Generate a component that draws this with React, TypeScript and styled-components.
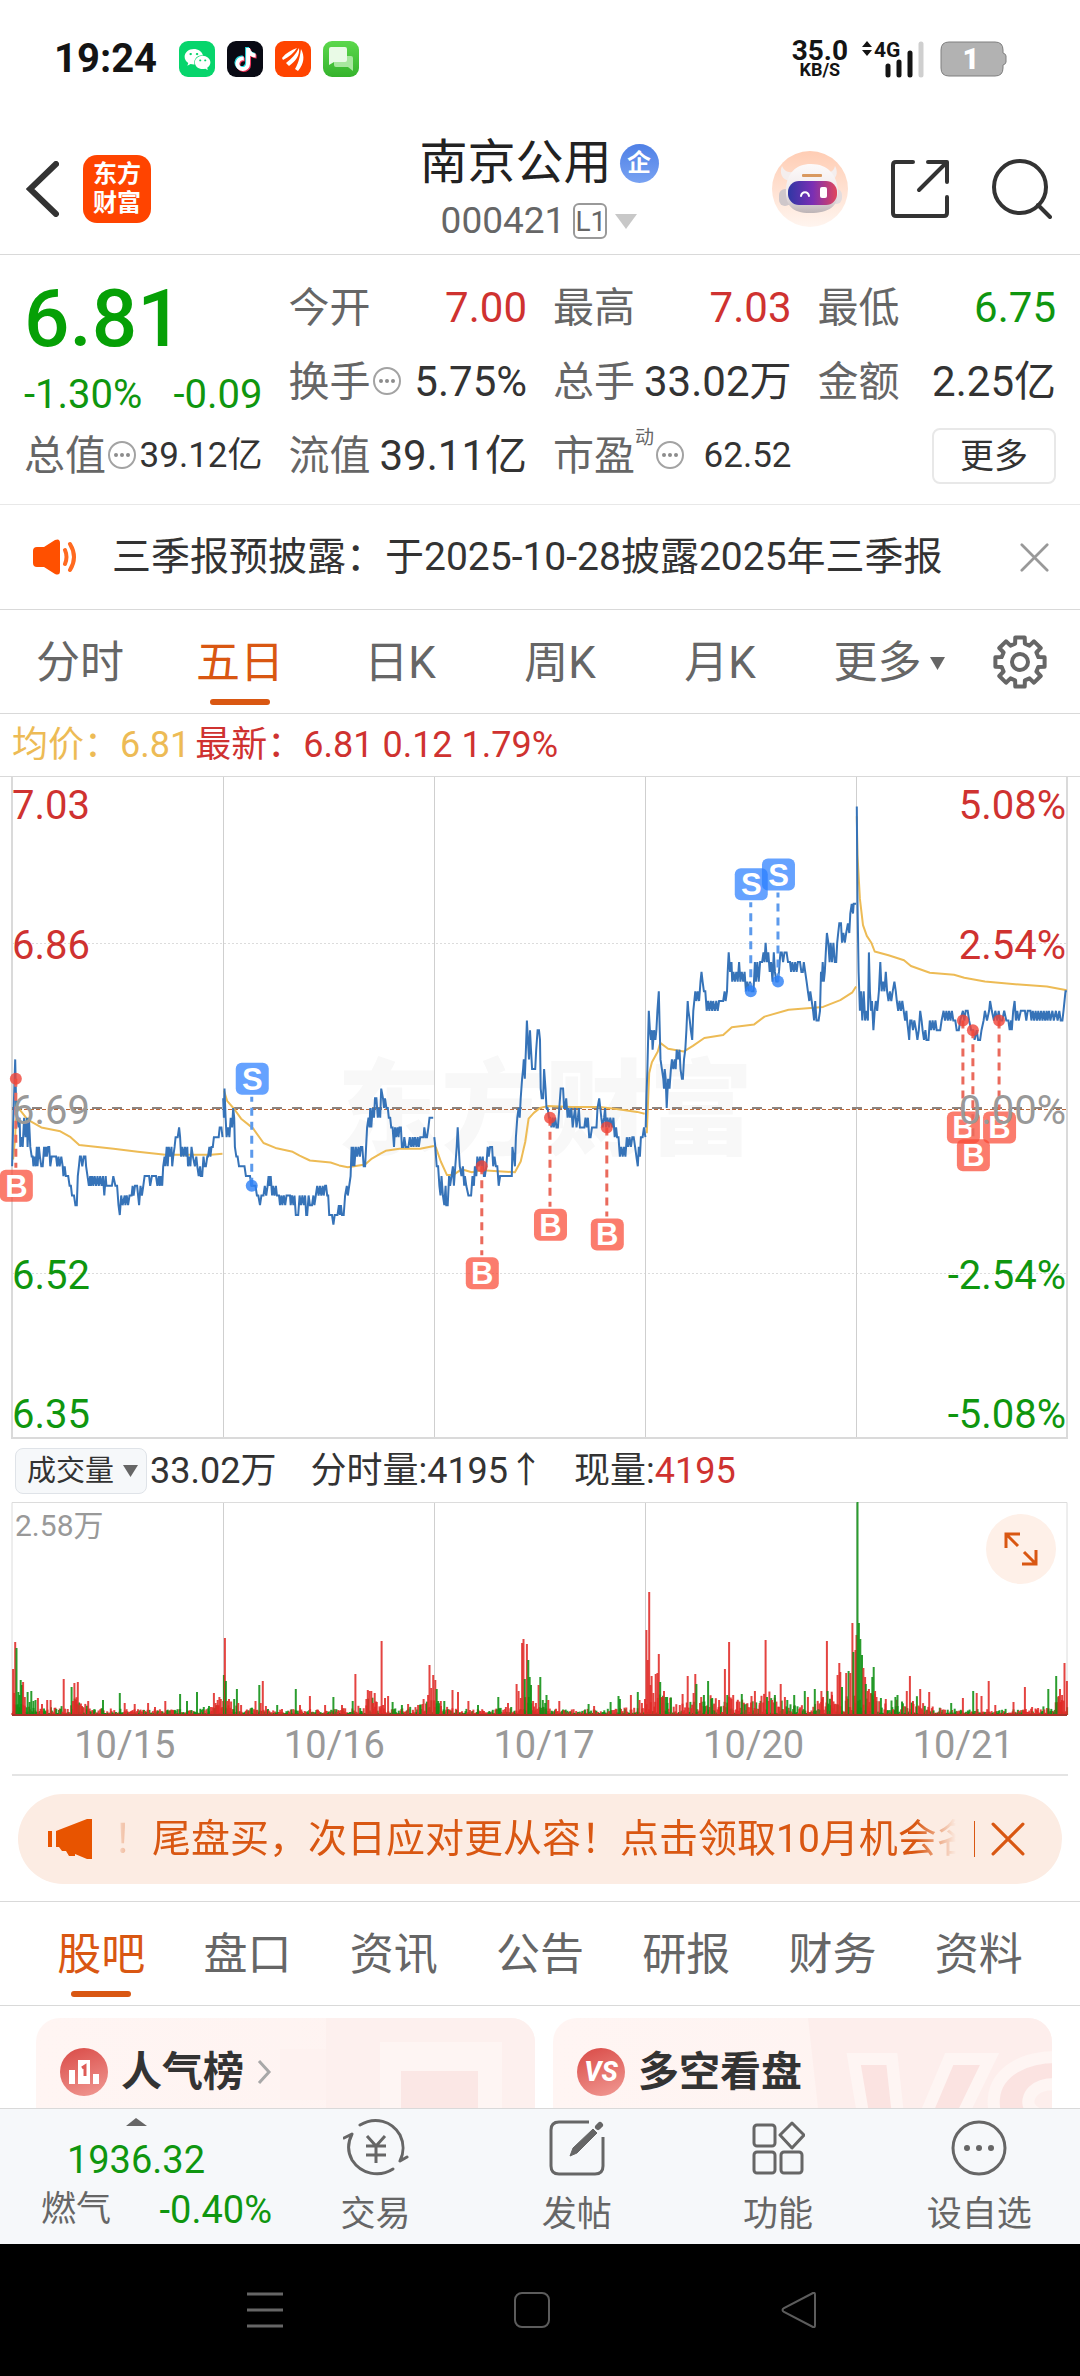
import React from 'react';
import styled, { createGlobalStyle } from 'styled-components';
import { FaWeixin } from 'react-icons/fa';
import { FaTiktok } from 'react-icons/fa6';

const C = {
  text: '#333333',
  sub: '#666666',
  mute: '#999999',
  line: '#d9d9d9',
  soft: '#e8e8e8',
  red: '#cf3230',
  green: '#0f960f',
  bright: '#06a006',
  orange: '#d95712',
  brand: '#ff4400',
  gold: '#edbb55',
  blue: '#3673b8',
  panel: '#f6f8fa',
};

const Global = createGlobalStyle`
  *, *::before, *::after { box-sizing: border-box; }
  body { margin: 0; background: #fff; }
  body, button, select {
    font-family: Roboto, "Noto Sans CJK SC", sans-serif;
    color: ${C.text};
  }
  button { background: none; border: 0; padding: 0; margin: 0; cursor: pointer; }
  svg { display: block; flex: none; }
  h1, h2, p, dl, dd, dt { margin: 0; font-weight: 400; }
`;

const Page = styled.div`
  display: flex;
  flex-direction: column;
  height: 100vh;
  overflow: hidden;
`;

/* ---------- status bar ---------- */

const StatusBar = styled.div`
  display: flex;
  justify-content: space-between;
  align-items: center;
  height: 80px;
  padding: 38px 73px 0 54px;
  color: #141414;
`;

const StatusGroup = styled.div<{ $gap: number }>`
  display: flex;
  align-items: center;
  gap: ${(p) => p.$gap}px;
`;

const Clock = styled.span`
  font-size: 40px;
  line-height: 42px;
  font-weight: 700;
  margin-right: 10px;
`;

const AppBadge = styled.span<{ $bg: string }>`
  display: flex;
  align-items: center;
  justify-content: center;
  width: 36px;
  height: 36px;
  border-radius: 9px;
  background: ${(p) => p.$bg};
  color: #fff;
`;

const Speed = styled.div`
  display: flex;
  flex-direction: column;
  align-items: center;
  font-weight: 700;
  font-size: 28px;
  line-height: 22px;
`;

const SpeedUnit = styled.span`
  font-size: 18px;
  line-height: 16px;
`;

/* ---------- title bar ---------- */

const Header = styled.header`
  display: grid;
  grid-template-columns: 1fr auto 1fr;
  align-items: center;
  padding: 58px 28px 15px 26px;
  border-bottom: 1px solid ${C.line};
`;

const HeaderSide = styled.div<{ $gap: number; $end?: boolean }>`
  display: flex;
  align-items: center;
  justify-content: ${(p) => (p.$end ? 'flex-end' : 'flex-start')};
  gap: ${(p) => p.$gap}px;
`;

const Logo = styled.span`
  display: flex;
  align-items: center;
  justify-content: center;
  width: 68px;
  height: 68px;
  border-radius: 14px;
  background: ${C.brand};
  color: #fff;
  font-size: 24px;
  line-height: 29px;
  font-weight: 700;
  text-align: center;
`;

const TitleBlock = styled.div`
  display: flex;
  flex-direction: column;
  align-items: center;
  gap: 15px;
`;

const TitleRow = styled.div`
  display: flex;
  align-items: center;
  gap: 8px;
`;

const Title = styled.h1`
  font-size: 48px;
  line-height: 50px;
  color: #222;
`;

const CorpBadge = styled.span`
  width: 39px;
  height: 39px;
  border-radius: 50%;
  background: linear-gradient(#4f80e6, #78a2f2);
  color: #fff;
  font-size: 24px;
  line-height: 38px;
  font-weight: 700;
  text-align: center;
`;

const CodeRow = styled.button`
  display: flex;
  align-items: center;
  gap: 8px;
  height: 36px;
  font-size: 37px;
  line-height: 36px;
  color: ${C.sub};
`;

const LevelTag = styled.span`
  width: 34px;
  height: 36px;
  border: 2px solid ${C.mute};
  border-radius: 6px;
  font-size: 28px;
  line-height: 33px;
  text-align: center;
`;

/* ---------- quote ---------- */

const Quote = styled.dl`
  display: grid;
  grid-template-columns: repeat(4, 1fr);
  grid-auto-rows: 56px;
  gap: 18px 26px;
  padding: 25px 24px 20px;
  border-bottom: 1px solid ${C.soft};
`;

const PriceCell = styled.div`
  grid-row: span 2;
  display: flex;
  flex-direction: column;
  justify-content: space-between;
  color: ${C.bright};
`;

const Price = styled.dd`
  font-size: 80px;
  line-height: 78px;
  font-weight: 500;
`;

const Change = styled.dd`
  display: flex;
  justify-content: space-between;
  font-size: 40px;
  line-height: 30px;
  color: ${C.green};
`;

const Cell = styled.div`
  display: flex;
  align-items: center;
  justify-content: space-between;
  white-space: nowrap;
`;

const Label = styled.dt`
  display: flex;
  align-items: center;
  font-size: 41px;
  line-height: 56px;
  color: ${C.sub};
`;

const Sup = styled.sup`
  align-self: flex-start;
  font-size: 19px;
  line-height: 20px;
`;

const Value = styled.dd<{ $color?: string; $small?: boolean }>`
  font-size: ${(p) => (p.$small ? 35 : 42)}px;
  line-height: 56px;
  color: ${(p) => p.$color || C.text};
`;

const MoreButton = styled.button`
  justify-self: end;
  width: 124px;
  height: 56px;
  border: 2px solid ${C.soft};
  border-radius: 8px;
  font-size: 34px;
  line-height: 50px;
`;

/* ---------- notice ---------- */

const Notice = styled.div`
  display: flex;
  align-items: center;
  padding: 25px 31px;
  border-bottom: 1px solid ${C.line};
`;

const NoticeText = styled.p`
  flex: 1;
  margin-left: 32px;
  font-size: 39px;
  line-height: 54px;
  white-space: nowrap;
  overflow: hidden;
`;

/* ---------- tabs ---------- */

const TabBar = styled.nav<{ $pad?: number }>`
  display: flex;
  padding: 0 ${(p) => p.$pad || 0}px;
  border-bottom: 1px solid ${C.line};
`;

const Tab = styled.button<{ $active?: boolean }>`
  flex: 1 1 0;
  display: flex;
  flex-direction: column;
  align-items: center;
  gap: 6px;
  padding: 23px 0 8px;
  font-size: 44px;
  line-height: 60px;
  color: ${(p) => (p.$active ? C.orange : C.sub)};
  white-space: nowrap;

  &::after {
    content: '';
    width: 60px;
    height: 6px;
    border-radius: 3px;
    background: ${(p) => (p.$active ? C.orange : 'transparent')};
  }
`;

const TabLabel = styled.span`
  display: flex;
  align-items: center;
  gap: 8px;
  padding-left: 18px;
`;

const GearButton = styled.button`
  display: flex;
  align-items: center;
  justify-content: center;
  width: 120px;
`;

/* ---------- chart ---------- */

const Legend = styled.div`
  display: flex;
  gap: 9px;
  padding-left: 12px;
  font-size: 36px;
  line-height: 62px;
  color: ${C.red};
`;

const LegendAverage = styled.span`
  color: ${C.gold};
  margin-right: -4px;
`;

const ChartSvg = styled.svg`
  width: 100%;
  height: auto;
`;

const VolumeHead = styled.div`
  display: flex;
  align-items: center;
  height: 63px;
  padding-left: 15px;
  font-size: 36px;
  line-height: 46px;
  white-space: nowrap;
`;

const SelectWrap = styled.label`
  position: relative;
  display: flex;
  align-items: center;

  svg {
    position: absolute;
    right: 9px;
    pointer-events: none;
  }
`;

const IndexSelect = styled.select`
  appearance: none;
  width: 132px;
  height: 46px;
  padding: 0 0 0 11px;
  border: 1px solid #dfe3e8;
  border-radius: 8px;
  background: ${C.panel};
  font-size: 29px;
  line-height: 40px;
`;

const VolumeItem = styled.span<{ $gap: number }>`
  margin-left: ${(p) => p.$gap}px;

  em {
    font-style: normal;
    color: ${C.red};
  }
`;

const VolumeWrap = styled.div`
  position: relative;
`;

const ExpandButton = styled.button`
  position: absolute;
  top: 12px;
  right: 24px;
  display: flex;
  align-items: center;
  justify-content: center;
  width: 70px;
  height: 70px;
  border-radius: 50%;
  background: #fef0e8;
`;

const Dates = styled.div`
  display: grid;
  grid-template-columns: repeat(5, 1fr);
  margin: 0 12px;
  padding-left: 8px;
  border-bottom: 2px solid #e4e4e4;
  font-size: 38px;
  line-height: 58px;
  text-align: center;
  color: ${C.mute};
`;

/* ---------- banner ---------- */

const Banner = styled.div`
  display: flex;
  align-items: center;
  height: 90px;
  margin: 18px 18px 17px;
  padding: 0 37px 0 29px;
  border-radius: 45px;
  background: #fcece3;
  color: ${C.orange};
`;

const BannerLink = styled.a`
  flex: 1;
  min-width: 0;
  margin: 0 18px 0 20px;
  font-size: 39px;
  line-height: 54px;
  color: inherit;
  text-decoration: none;
  white-space: nowrap;
  overflow: hidden;
  mask-image: linear-gradient(90deg, transparent, #000 40px, #000 calc(100% - 40px), transparent);
`;

const BannerRule = styled.span`
  width: 1px;
  height: 36px;
  margin-right: 16px;
  background: ${C.orange};
`;

const SectionTop = styled.div`
  border-top: 1px solid ${C.line};
`;

/* ---------- feed cards ---------- */

const Feed = styled.main`
  flex: 1;
  min-height: 0;
  overflow: hidden;
  display: grid;
  grid-template-columns: 1fr 1fr;
  align-items: start;
  gap: 18px;
  padding: 12px 28px 0 36px;
`;

const Card = styled.section`
  position: relative;
  display: flex;
  align-items: center;
  gap: 13px;
  height: 180px;
  padding: 0 24px 72px;
  border-radius: 24px;
  background: linear-gradient(90deg, #fff5f3, #fef3f1);
  overflow: hidden;
`;

const CardArt = styled.svg`
  position: absolute;
  top: 0;
  right: 0;
`;

const CardTitle = styled.h2`
  position: relative;
  font-size: 41px;
  line-height: 56px;
  font-weight: 700;
`;

const CardIcon = styled.span`
  display: flex;
  align-items: center;
  justify-content: center;
  width: 48px;
  height: 48px;
  border-radius: 50%;
  background: linear-gradient(160deg, #d94a46, #f19a94);
  color: #fff;
  font-size: 27px;
  font-weight: 800;
  font-style: italic;
`;

/* ---------- bottom navigation ---------- */

const BottomNav = styled.nav`
  display: flex;
  border-top: 1px solid ${C.line};
  background: ${C.panel};
`;

const IndexButton = styled.button`
  width: 275px;
  padding: 9px 3px 0 41px;
  display: flex;
  flex-direction: column;
  color: ${C.green};
  font-size: 38px;
`;

const IndexValue = styled.span`
  display: flex;
  flex-direction: column;
  align-items: center;
  gap: 8px;
  margin-left: -41px;
  line-height: 52px;
`;

const IndexRow = styled.span`
  display: flex;
  justify-content: space-between;
  line-height: 48px;
`;

const IndexName = styled.span`
  font-size: 35px;
  color: ${C.sub};
`;

const NavButton = styled.button`
  flex: 1 1 0;
  display: flex;
  flex-direction: column;
  align-items: center;
  gap: 19px;
  padding: 11px 0 9px;
  font-size: 35px;
  line-height: 40px;
  color: ${C.sub};
`;

const NavIcon = styled.span`
  display: flex;
  align-items: center;
  height: 56px;
`;

const SystemNav = styled.div`
  display: grid;
  grid-template-columns: repeat(3, 1fr);
  height: 132px;
  padding: 0 147px 0 131px;
  background: #000;
`;

const SystemKey = styled.button`
  display: flex;
  align-items: center;
  justify-content: center;
`;

/* ---------- icons ---------- */

const Down = ({ w, h, color }: { w: number; h: number; color: string }) => (
  <svg width={w} height={h} viewBox="0 0 10 10" preserveAspectRatio="none" aria-hidden>
    <path d="M0 0H10L5 10Z" fill={color} />
  </svg>
);

const Info = () => (
  <svg width="31" height="31" viewBox="0 0 31 31" aria-hidden>
    <circle cx="16" cy="14" r="13" fill="none" stroke="#a3a3a3" strokeWidth="2" />
    <g fill="#8c8c8c">
      <circle cx="10" cy="14" r="2" />
      <circle cx="16" cy="14" r="2" />
      <circle cx="22" cy="14" r="2" />
    </g>
  </svg>
);

const Cross = ({ size, color, sw }: { size: number; color: string; sw: number }) => (
  <svg width={size} height={size} viewBox="0 0 32 32" aria-hidden>
    <path d="M2 2L30 30M30 2L2 30" stroke={color} strokeWidth={sw} strokeLinecap="round" />
  </svg>
);

const Robot = () => (
  <svg width="76" height="76" viewBox="0 0 76 76" aria-hidden>
    <defs>
      <linearGradient id="halo" x1="0" y1="0" x2="0" y2="1">
        <stop offset="0" stopColor="#ffcdb4" />
        <stop offset="1" stopColor="#fff5ef" />
      </linearGradient>
      <linearGradient id="visor" x1="0" y1="0" x2="1" y2="0">
        <stop offset="0" stopColor="#2f37a4" />
        <stop offset=".5" stopColor="#7a2fb4" />
        <stop offset="1" stopColor="#e0465c" />
      </linearGradient>
      <linearGradient id="shell" x1="0" y1="0" x2="0" y2="1">
        <stop offset="0" stopColor="#fdfafa" />
        <stop offset=".6" stopColor="#efe9ea" />
        <stop offset="1" stopColor="#bdb4b6" />
      </linearGradient>
    </defs>
    <circle cx="38" cy="38" r="38" fill="url(#halo)" />
    <path d="M10 15C7 22 10 29 18 30L24 20C17 23 12 20 10 15ZM63 15C67 22 64 29 57 30L51 20C58 23 62 20 63 15Z" fill="#f4eeee" />
    <rect x="7" y="38" width="12" height="17" rx="6" fill="#cfc7ca" />
    <rect x="59" y="38" width="11" height="15" rx="6" fill="#e3dcde" />
    <path d="M39 13C56 13 65 24 66 40C67 55 57 62 38 62C20 62 13 54 14 38C15 23 23 13 39 13Z" fill="url(#shell)" />
    <rect x="30" y="23" width="20" height="3" rx="1" fill="#d9995f" />
    <rect x="16" y="30" width="49" height="24" rx="11" fill="url(#visor)" />
    <path d="M29 45C30 40 36 40 37 45" fill="none" stroke="#fff" strokeWidth="2" strokeLinecap="round" />
    <rect x="48" y="36" width="7" height="11" rx="2" fill="#fff" />
  </svg>
);

const Share = () => (
  <svg width="58" height="58" viewBox="0 0 58 58" fill="none" stroke="#333" strokeWidth="4" strokeLinecap="round" strokeLinejoin="round" aria-hidden>
    <path d="M22 2H5Q2 2 2 5V53Q2 56 5 56H53Q56 56 56 53V37" />
    <path d="M37 2H56V22M55 3L28 30" />
  </svg>
);

const Search = () => (
  <svg width="60" height="60" viewBox="0 0 60 60" fill="none" stroke="#333" strokeWidth="4" strokeLinecap="round" aria-hidden>
    <circle cx="28" cy="28" r="26" />
    <path d="M46 46L58 58" />
  </svg>
);

const Speaker = () => (
  <svg width="49" height="38" viewBox="0 0 49 38" aria-hidden>
    <path d="M6 9H13L24 2Q29 0 29 5V33Q29 38 24 36L13 29H6Q2 29 2 25V13Q2 9 6 9Z" fill="#ff5000" />
    <path d="M34 12Q37 19 34 26M39 6Q47 19 39 32" fill="none" stroke="#ff6a20" strokeWidth="4" strokeLinecap="round" />
  </svg>
);

const Megaphone = () => (
  <svg width="46" height="42" viewBox="0 0 46 42" fill="#e85400" aria-hidden>
    <path d="M1 13H5V29H1ZM9 13L40 1H45V41H40L28 36V38H22L19 33H15L12 29H9Z" />
  </svg>
);

const Gear = () => {
  const pts: string[] = [];
  for (let i = 0; i < 8; i++) {
    const a = (i * Math.PI) / 4 - Math.PI / 2;
    [[-0.26, 19], [-0.19, 25], [0.19, 25], [0.26, 19]].forEach(([d, r]) => {
      pts.push(`${(27 + r * Math.cos(a + d)).toFixed(1)},${(27 + r * Math.sin(a + d)).toFixed(1)}`);
    });
  }
  return (
    <svg width="54" height="54" viewBox="0 0 54 54" fill="none" stroke={C.sub} strokeWidth="4" strokeLinejoin="round" aria-hidden>
      <polygon points={pts.join(' ')} />
      <circle cx="27" cy="27" r="8" />
    </svg>
  );
};

const Trade = () => (
  <svg width="66" height="60" viewBox="0 0 66 60" fill="none" stroke={C.sub} strokeWidth="3" strokeLinecap="round" strokeLinejoin="round" aria-hidden>
    <path d="M17 7C32 -2 49 3 57 17C61 25 61 35 57 43L64 39" />
    <path d="M50 51C36 60 18 56 9 42C4 33 5 24 9 16L1 20" />
    <path d="M24 18L33 28L42 18M33 28V45M23 28H43M23 37H43" strokeLinecap="butt" />
  </svg>
);

const Compose = () => (
  <svg width="56" height="58" viewBox="0 0 56 58" fill="none" stroke={C.sub} strokeWidth="3" aria-hidden>
    <path d="M40 3H10Q2 3 2 11V47Q2 55 10 55H46Q54 55 54 47V18" />
    <path d="M21 37L24 29L44 10L48 14L28 34Z" fill={C.sub} strokeWidth="1" />
    <path d="M49 8L51 6" strokeWidth="6" strokeLinecap="round" />
  </svg>
);

const Apps = () => (
  <svg width="54" height="56" viewBox="0 0 54 56" fill="none" stroke={C.sub} strokeWidth="3" strokeLinejoin="round" aria-hidden>
    <rect x="3" y="5" width="21" height="21" rx="3" />
    <rect x="3" y="32" width="21" height="21" rx="3" />
    <rect x="30" y="32" width="21" height="21" rx="3" />
    <path d="M41 3L53 15L41 28L29 15Z" />
  </svg>
);

const Dots = () => (
  <svg width="56" height="56" viewBox="0 0 56 56" aria-hidden>
    <circle cx="28" cy="28" r="26" fill="none" stroke={C.sub} strokeWidth="3" />
    <g fill={C.sub}>
      <circle cx="16" cy="28" r="3" />
      <circle cx="28" cy="28" r="3" />
      <circle cx="40" cy="28" r="3" />
    </g>
  </svg>
);

/* ---------- chart data ---------- */

// Horizontal positions run over AXIS units across the screen; prices are in cents away from 6.69.
const AXIS = 3136;
const W = 1080;
const LEFT = 12;
const DAY = 211;
const RIGHT = LEFT + DAY * 5;
const px = (x: number) => (x * W) / AXIS;
const ZERO = 332;
const CENT = 165.3 / 17;
const py = (c: number) => ZERO - c * CENT;

const PRICE = [
  '35:-6 38:-2 44:5 47:0 50:-1 54:-2 57:-1 59:-4 62:-3 66:-4 70:-1 74:-3 78:-1 80:-4 84:-1 88:-4 92:-5 95:-5 97:-6 100:-5 104:-6 107:-4 109:-6 113:-4 116:-5 120:-6 124:-6 128:-4 131:-5 134:-4 136:-5 140:-4 143:-4 146:-6 150:-5 163:-5 166:-6 170:-5 173:-6 178:-5 182:-6 184:-7 188:-6 191:-7 195:-7 198:-7 202:-8 206:-8 209:-9 215:-9 219:-10 223:-10 226:-7 229:-6 232:-5 235:-5 239:-6 243:-5 248:-5 250:-6 254:-7 258:-8 262:-7 264:-8 268:-7 271:-8 275:-7 279:-8 283:-7 287:-8 291:-7 295:-8 299:-7 303:-9 307:-7 309:-8 325:-8 329:-7 335:-8 340:-8 344:-10 348:-11 352:-9 356:-10 362:-9 364:-10 368:-9 372:-10 376:-9 382:-9 385:-8 388:-9 392:-8 398:-8 404:-10 408:-8 412:-9 416:-8 420:-7 433:-7 436:-8 441:-7 453:-7 457:-8 461:-7 464:-8 467:-7 471:-8 474:-6 478:-5 480:-6 484:-4 487:-6 490:-4 494:-5 498:-4 500:-6 503:-5 507:-4 510:-3 516:-3 520:-2 523:-3 526:-5 529:-4 533:-5 537:-4 541:-5 544:-4 546:-6 550:-5 553:-6 556:-4 560:-5 566:-6 570:-5 573:-6 577:-7 581:-6 583:-7 587:-7 591:-5 594:-6 598:-6 602:-5 604:-5 608:-4 611:-5 614:-4 618:-4 621:-3 635:-3 638:-2 643:-2 646:-3',
  '648:1 650:-1 652:2 655:-1 658:-3 662:-2 666:-3 670:-1 674:-2 677:0 680:-1 682:-4 686:-5 690:-5 694:-6 710:-6 714:-7 726:-7 730:-8 742:-8 746:-9 750:-9 755:-10 759:-9 765:-9 769:-8 773:-9 777:-8 780:-7 783:-8 786:-7 790:-9 793:-8 797:-9 801:-8 804:-9 810:-9 813:-10 817:-9 820:-10 824:-9 828:-10 832:-9 842:-9 844:-10 848:-9 852:-10 855:-9 859:-11 866:-11 870:-9 874:-10 878:-9 882:-10 886:-9 889:-11 892:-11 896:-9 900:-10 906:-10 910:-9 913:-10 917:-9 921:-8 925:-9 929:-8 933:-9 937:-8 940:-9 944:-8 947:-8 950:-9 953:-9 956:-11 964:-11 968:-12 972:-11 980:-11 984:-10 987:-11 990:-10 993:-11 998:-11 1002:-9 1007:-8 1010:-9 1014:-8 1018:-7 1021:-4 1024:-6 1026:-4 1029:-6 1033:-4 1037:-5 1041:-4 1045:-5 1048:-4 1052:-4 1056:-6 1060:-6 1063:-4 1066:-2 1070:-1 1073:-2 1075:0 1078:-2 1082:0 1086:-1 1089:1 1093:1 1097:-1 1101:0 1104:-1 1107:2 1112:1 1115:0 1118:1 1122:0 1126:0 1129:-1 1133:-1 1136:-2 1140:-2 1144:-4 1147:-2 1150:-3 1154:-2 1157:-3 1160:-2 1164:-2 1167:-4 1171:-4 1174:-3 1178:-4 1186:-4 1190:-3 1194:-4 1198:-3 1201:-4 1205:-3 1209:-4 1213:-3 1216:-4 1220:-3 1230:-3 1232:-2 1236:-3 1240:-3 1244:-2 1247:-1 1258:-1',
  '1261:-3 1264:-4 1268:-6 1272:-6 1276:-8 1279:-9 1282:-7 1286:-9 1290:-10 1294:-8 1296:-10 1300:-10 1304:-7 1307:-8 1311:-7 1315:-6 1318:-8 1322:-6 1326:-4 1329:-2 1332:-4 1335:-6 1340:-7 1344:-6 1348:-8 1350:-7 1354:-8 1360:-9 1368:-9 1372:-7 1376:-8 1379:-6 1383:-7 1386:-5 1390:-6 1394:-5 1398:-6 1402:-5 1405:-7 1408:-7 1412:-6 1416:-4 1419:-5 1423:-4 1429:-4 1432:-6 1436:-5 1440:-6 1444:-6 1448:-8 1452:-7 1486:-7 1488:-4 1492:-5 1495:-6 1498:-3 1502:-1 1506:0 1509:-1 1512:1 1516:3 1519:4 1521:5 1524:3 1527:6 1530:9 1533:7 1536:5 1539:8 1542:6 1545:4 1554:4 1557:6 1561:8 1565:8 1568:7 1570:2 1573:1 1577:1 1580:4 1584:2 1587:0 1590:0 1594:-1 1597:-1 1601:-2 1605:-1 1608:-2 1612:-1 1616:-2 1620:-2 1624:0 1628:2 1635:2 1638:0 1641:0 1644:1 1648:-1 1651:0 1655:-1 1659:0 1663:-2 1666:-1 1670:0 1674:-2 1678:-1 1681:0 1684:-2 1697:-2 1700:-1 1704:-2 1707:-1 1711:-3 1715:-3 1719:-2 1732:-2 1735:0 1740:1 1743:0 1746:-1 1750:-2 1754:-1 1757:0 1760:-2 1764:-1 1768:-2 1772:-1 1778:-2 1781:-1 1785:-3 1789:-2 1792:-3 1796:-3 1800:-5 1804:-4 1808:-5 1812:-4 1816:-5 1820:-3 1824:-4 1828:-3 1832:-4 1836:-3 1840:-3 1844:-4 1848:-5 1852:-6 1855:-4 1858:-5 1861:-3 1866:-3 1870:-2 1874:-3',
  '1875:-2 1877:1 1880:4 1884:10 1887:8 1890:7 1893:8 1895:6 1899:8 1903:7 1906:8 1909:10 1913:12 1915:9 1918:5 1922:4 1926:3 1928:2 1930:4 1933:3 1936:0 1940:3 1944:2 1948:4 1951:5 1955:4 1959:5 1962:4 1965:6 1969:5 1973:6 1976:4 1980:3 1983:3 1986:5 1990:6 1993:8 1997:11 1999:10 2003:9 2006:8 2010:7 2013:10 2016:11 2019:12 2022:11 2026:12 2030:11 2034:13 2037:14 2040:13 2044:12 2048:12 2052:10 2056:11 2060:10 2064:11 2068:10 2071:11 2076:10 2080:11 2084:10 2088:11 2100:11 2104:12 2107:11 2111:12 2113:14 2116:16 2120:14 2124:15 2126:13 2130:14 2134:13 2138:14 2142:13 2146:15 2150:13 2154:14 2158:13 2162:14 2166:12 2170:13 2174:12 2178:13 2182:12 2188:12 2192:15 2195:13 2199:15 2203:13 2207:15 2213:15 2217:16 2220:15 2223:17 2227:15 2231:16 2235:14 2239:15 2243:13 2247:16 2250:14 2254:13 2258:13 2262:14 2266:16 2270:16 2274:15 2278:16 2284:16 2288:15 2294:15 2297:14 2301:15 2305:14 2309:15 2313:14 2317:15 2323:15 2327:14 2331:14 2334:15 2338:14 2342:13 2346:12 2350:11 2353:12 2357:11 2361:10 2364:9 2367:11 2371:9 2377:9 2381:10 2384:14 2386:13 2389:15 2392:13 2395:14 2398:16 2401:18 2405:17 2409:15 2412:17 2416:15 2420:17 2424:15 2428:15 2431:17 2434:18 2437:19 2442:19 2445:17 2449:18 2453:17 2457:18 2462:19 2466:18 2469:20 2473:21 2477:20 2479:21 2486:21',
  '2488:31 2490:21 2493:14 2497:10 2500:12 2504:9 2508:12 2512:9 2516:10 2520:9 2523:16 2526:12 2529:10 2532:11 2536:8 2540:10 2543:11 2547:10 2552:12 2556:15 2560:12 2564:13 2568:12 2572:14 2576:12 2580:11 2584:12 2588:11 2592:12 2597:13 2601:12 2604:11 2608:10 2612:11 2616:10 2620:11 2624:10 2628:9 2632:10 2634:9 2637:8 2640:7 2643:9 2647:9 2651:8 2655:9 2660:8 2664:7 2668:8 2672:10 2676:9 2679:8 2683:7 2687:8 2690:7 2696:7 2700:9 2704:8 2708:9 2712:8 2716:9 2720:8 2730:8 2734:9 2740:10 2744:9 2748:10 2752:9 2756:10 2760:9 2764:10 2768:9 2774:9 2778:8 2784:8 2788:9 2796:10 2800:9 2804:10 2810:10 2814:9 2820:8 2826:8 2830:7 2836:8 2840:7 2846:7 2850:8 2856:9 2860:10 2866:9 2872:10 2875:11 2880:10 2886:9 2890:10 2896:9 2900:10 2904:9 2910:9 2916:10 2922:9 2928:9 2932:8 2936:9 2938:8 2942:10 2946:11 2950:9 2954:10 2958:9 2964:10 2968:10 2976:10 2980:9 2984:10 2992:10 2995:9 2999:10 3003:9 3007:10 3011:9 3015:10 3019:9 3023:10 3027:9 3031:10 3035:9 3039:10 3042:9 3046:10 3050:9 3056:10 3060:9 3066:10 3071:9 3076:10 3080:9 3085:9 3088:10 3094:12 3098:12',
];

const AVERAGE = [
  '38:-5.3 44:-3 48:.3 60:-.3 80:-1.2 120:-2 175:-2.4 205:-3 230:-3.8 330:-4.2 400:-4.5 480:-4.8 590:-4.8 612:-4.8 646:-4.7',
  '650:1.8 660:.7 680:-.1 700:-1.1 735:-2.1 765:-3.6 800:-4.1 850:-4.5 870:-4.9 900:-5.4 960:-5.6 985:-5.9 1010:-6.1 1060:-5.8 1080:-5.2 1105:-4.7 1120:-4.4 1160:-4.2 1220:-4.2 1260:-3.9',
  '1265:-4 1280:-5.5 1298:-6.9 1315:-6.9 1340:-6.3 1370:-6.6 1400:-6.4 1495:-6.6 1512:-5.5 1525:-3.5 1535:-1.1 1550:-.5 1568:0 1590:.2 1660:.1 1740:.1 1790:-.1 1850:-.4 1872:-.6',
  '1878:-2.6 1885:3.6 1893:4.7 1910:5.8 1917:6.7 1940:6.1 1985:5.8 2012:6.4 2045:7.2 2100:7.5 2125:8.3 2190:8.6 2220:9.4 2290:10.1 2390:10.4 2440:11.1 2475:11.9 2486:12.5',
  '2488:30 2490:26 2497:21.5 2506:18.8 2517:17.7 2530:17 2540:16.1 2580:15.7 2625:15.2 2645:14.6 2700:13.9 2770:13.7 2800:13.4 2860:13 2960:12.7 3040:12.5 3098:12.1',
];

const toPoints = (s: string) =>
  s
    .split(' ')
    .map((p) => p.split(':').map(Number))
    .map(([x, c]) => `${px(x).toFixed(1)},${py(c).toFixed(1)}`)
    .join(' ');

const TRADES: { x: number; c: number; buy: boolean }[] = [
  { x: 46, c: 3, buy: true },
  { x: 731, c: -8, buy: false },
  { x: 1399, c: -6, buy: true },
  { x: 1597, c: -1, buy: true },
  { x: 1762, c: -2, buy: true },
  { x: 2180, c: 12, buy: false },
  { x: 2259, c: 13, buy: false },
  { x: 2796, c: 9, buy: true },
  { x: 2825, c: 8, buy: true },
  { x: 2901, c: 9, buy: true },
];

const tradeOffset = (t: { x: number; buy: boolean }) => (t.x === 2825 ? 125 : 107) * (t.buy ? 1 : -1);

const SPIKES =
  '38:46r 41:22r 44:73r 48:67g 53:23g 57:20g 60:35g 64:30g 67:33r 72:18r 80:23g 86:13g 91:24g 97:14g 103:15g 110:17r 122:11r 137:15r 147:15r 185:36r 208:28g 212:14r 216:32r 221:15r 226:33r 231:10r 238:9r 256:14r 299:15g 348:22g 362:12r 391:11r 430:12r 450:8r 480:14r 523:21g 543:14g 572:23g 607:9g 621:22r 626:12r 632:15r 637:18r 641:16r 650:40g 653:77r 656:34g 660:14r 665:16r 680:16g 688:26g 692:12r 700:10r 742:14r 753:30g 757:12r 763:34r 772:9r 805:10g 859:26g 871:10r 900:19r 944:10r 968:18g 993:10r 1024:14g 1032:41r 1064:16r 1068:25r 1073:24r 1078:24r 1083:12r 1088:22r 1094:13r 1108:74r 1118:17r 1127:19r 1140:13g 1167:10g 1185:11r 1214:10r 1230:16r 1243:20r 1247:50r 1252:27r 1258:40r 1264:35r 1268:26g 1272:14g 1280:14r 1290:14g 1314:25r 1330:23r 1360:14r 1388:10g 1447:18g 1475:12r 1500:31r 1506:24r 1512:17r 1516:72r 1520:76r 1524:36g 1530:71r 1534:55g 1538:38g 1542:30g 1548:14r 1556:12r 1564:30r 1569:38g 1576:15g 1583:12g 1587:20g 1592:15r 1624:14r 1709:11g 1725:9r 1773:13g 1796:19g 1800:16g 1832:20r 1852:23g 1857:15r 1864:12r 1873:16r 1877:85r 1881:55r 1885:123r 1889:30r 1892:39r 1897:22r 1904:41r 1909:42r 1913:61r 1917:33g 1922:18r 1928:24r 1933:18g 1937:18g 1982:21r 1997:39r 2014:22r 2019:41r 2022:31g 2036:18r 2044:20g 2056:34g 2068:17g 2088:15r 2105:46r 2112:20g 2117:73r 2124:16r 2129:20r 2154:21g 2182:19r 2192:24r 2206:12r 2223:75r 2227:18g 2250:20g 2267:31r 2279:18r 2286:15g 2306:20g 2337:24g 2346:18r 2366:26g 2385:24r 2401:74r 2403:24g 2416:20r 2432:40r 2437:52r 2440:43r 2445:28g 2457:42r 2464:44g 2469:42r 2475:92r 2478:63g 2484:65r 2487:80r 2490:213g 2494:92g 2498:76g 2503:60g 2507:47r 2512:38r 2514:31g 2519:24r 2523:26r 2529:22r 2533:38g 2537:48g 2541:24r 2545:18r 2558:17g 2572:16r 2600:18g 2606:20g 2633:24r 2642:39r 2651:14r 2672:26r 2698:23r 2762:12g 2796:17r 2826:24g 2836:22r 2850:19r 2871:34r 2890:10r 2943:13r 2976:28r 2997:8r 3044:26g 3067:39g 3074:19r 3078:26r 3084:20r 3091:52r 3098:34r';

const RISE = '#e02a27';
const FALL = '#0e8f12';

type Bar = { x: number; h: number; up: boolean };

const buildBars = (): Bar[] => {
  const bars: Bar[] = [];
  const busy = [35, 215, 655, 1075, 1250, 1530, 1885, 1925, 2060, 2120, 2230, 2410, 2470, 2500, 2530, 2600, 2660, 3080];
  let seed = 7;
  const rnd = () => {
    seed = (seed * 16807) % 2147483647;
    return seed / 2147483647;
  };
  for (let x = 36; x < 3100; x += 2.55) {
    const near = Math.min(...busy.map((b) => Math.abs(b - x)));
    const env = 4 + 15 * Math.exp(-near / 32) + (x > 1880 && x < 2560 ? 5 : 0);
    bars.push({ x, h: 2 + env * Math.pow(rnd(), 2), up: rnd() > 0.42 });
  }
  SPIKES.split(' ').forEach((s) => {
    const [x, v] = s.split(':');
    bars.push({ x: Number(x), h: parseInt(v, 10), up: v.endsWith('r') });
  });
  return bars;
};

const BARS = buildBars();
const DAY_LINES = [1, 2, 3, 4].map((i) => LEFT + DAY * i);

const PriceChart = () => (
  <ChartSvg viewBox="0 0 1080 663" role="img" aria-label="五日走势">
    <g fontFamily='"Noto Sans CJK SC", sans-serif' fontWeight="900" fontSize="104" fill="#f8f8f8">
      <text x="337" y="371">东方财富</text>
    </g>
    <path d="M0 .5H1080" stroke={C.line} />
    <path d={`M${LEFT} 167.5H${RIGHT}M${LEFT} 497.5H${RIGHT}`} stroke="#dcdcdc" strokeDasharray="2 2" />
    <path d={DAY_LINES.map((x) => `M${x + 0.5} 1V662`).join('')} stroke="#cfcfcf" />
    <path d={`M${LEFT} 1V662H${RIGHT}V1`} fill="none" stroke="#dadada" strokeWidth="2" />
    <path d={`M${LEFT} 332H${RIGHT}`} stroke="#8c8480" strokeWidth="2" strokeDasharray="10 10" />
    <path d={`M${LEFT} 333.5H${RIGHT}`} stroke="#b9683a" strokeDasharray="4 2" />
    <g fill="none" stroke={C.gold} strokeWidth="2" strokeLinejoin="round">
      {AVERAGE.map((s, i) => (
        <polyline key={i} points={toPoints(s)} />
      ))}
    </g>
    <g fill="none" stroke={C.blue} strokeWidth="2">
      {PRICE.map((s, i) => (
        <polyline key={i} points={toPoints(s)} />
      ))}
    </g>
    {TRADES.map((t) => {
      const x = px(t.x);
      const y = py(t.c);
      const cy = y + tradeOffset(t);
      const dir = t.buy ? 1 : -1;
      return (
        <g key={t.x}>
          <path d={`M${x} ${y}V${cy - 18 * dir}`} stroke={t.buy ? '#ea6a5c' : '#5c9aec'} strokeWidth="3" strokeDasharray="8 6" />
          <circle cx={x} cy={y} r="6" fill={t.buy ? '#f04438' : '#2a7ef5'} fillOpacity=".8" />
          <rect x={x - 16} y={cy - 16} width="33" height="32" rx="6" fill={t.buy ? '#fa4a34' : '#2a7eff'} fillOpacity=".72" />
          <text x={x + 0.5} y={cy + 11} textAnchor="middle" fontFamily='"Liberation Sans", sans-serif' fontWeight="700" fontSize="31" fill="#fff">
            {t.buy ? 'B' : 'S'}
          </text>
        </g>
      );
    })}
    <g fontFamily="Roboto, sans-serif" fontSize="40">
      {[
        ['7.03', '5.08%', 43, C.red],
        ['6.86', '2.54%', 183, C.red],
        ['6.69', '0.00%', 348, C.mute],
        ['6.52', '-2.54%', 513, C.green],
        ['6.35', '-5.08%', 652, C.green],
      ].map(([l, r, y, color]) => (
        <g key={l} fill={String(color)}>
          <text x={LEFT} y={y}>{l}</text>
          <text x={RIGHT - 1} y={y} textAnchor="end">{r}</text>
        </g>
      ))}
    </g>
  </ChartSvg>
);

const VolumeChart = () => (
  <ChartSvg viewBox="0 0 1080 214" role="img" aria-label="成交量">
    <path d={DAY_LINES.map((x) => `M${x + 0.5} 1V213`).join('')} stroke="#cfcfcf" />
    <path d={`M${LEFT} 213V.5H${RIGHT}V213`} fill="none" stroke="#dcdcdc" />
    <text x="15" y="34" fontFamily='Roboto, "Noto Sans CJK SC", sans-serif' fontSize="30" fill={C.mute}>2.58万</text>
    {BARS.map((b, i) => (
      <path key={i} d={`M${px(b.x).toFixed(1)} 213V${(213 - b.h).toFixed(1)}`} stroke={b.up ? RISE : FALL} strokeWidth="2" strokeOpacity=".88" />
    ))}
    <path d={`M${LEFT} 213H${RIGHT}`} stroke="#a8332a" strokeWidth="2" />
  </ChartSvg>
);

/* ---------- content ---------- */

const PERIODS = ['分时', '五日', '日K', '周K', '月K'];
const SECTIONS = ['股吧', '盘口', '资讯', '公告', '研报', '财务', '资料'];
const DATES = ['10/15', '10/16', '10/17', '10/20', '10/21'];
const ACTIONS = [
  { name: '交易', icon: <Trade /> },
  { name: '发帖', icon: <Compose /> },
  { name: '功能', icon: <Apps /> },
  { name: '设自选', icon: <Dots /> },
];

type StatProps = { label: string; value: string; color?: string; small?: boolean; info?: boolean; sup?: string };

const Stat = ({ label, value, color, small, info, sup }: StatProps) => (
  <Cell>
    <Label>
      {label}
      {sup && <Sup>{sup}</Sup>}
      {info && <Info />}
    </Label>
    <Value $color={color} $small={small}>{value}</Value>
  </Cell>
);

const TikTokMark = styled(FaTiktok)`
  filter: drop-shadow(-1px -1px 0 #25d9e0) drop-shadow(1px 1px 0 #f0335a);
`;

export default function App() {
  return (
    <>
      <Global />
      <Page>
        <StatusBar>
          <StatusGroup $gap={12}>
            <Clock>19:24</Clock>
            <AppBadge $bg="#07d56c"><FaWeixin size={27} /></AppBadge>
            <AppBadge $bg="#090a14"><TikTokMark size={23} /></AppBadge>
            <AppBadge $bg={C.brand}>
              <svg width="26" height="26" viewBox="0 0 26 26" fill="#fff" aria-hidden>
                <path d="M2 12C6 7 11 4 17 2C14 7 9 11 3 14ZM6 17C12 12 16 8 19 2C20 9 16 15 9 20ZM15 23C19 16 20 10 21 3C25 10 24 18 18 25Z" />
              </svg>
            </AppBadge>
            <AppBadge $bg="linear-gradient(#5cd84c, #35b32c)">
              <svg width="26" height="26" viewBox="0 0 26 26" aria-hidden>
                <path d="M8 10H23Q25 10 25 12V25L20 21H8Q6 21 6 19V12Q6 10 8 10Z" fill="#a8e79f" />
                <path d="M3 1H17Q19 1 19 3V14Q19 16 17 16H6L1 19V3Q1 1 3 1Z" fill="#e9fae6" />
              </svg>
            </AppBadge>
          </StatusGroup>
          <StatusGroup $gap={14}>
            <Speed>
              35.0
              <SpeedUnit>KB/S</SpeedUnit>
            </Speed>
            <svg width="64" height="38" viewBox="0 0 64 38" aria-hidden>
              <path d="M0 7L5 1L10 7ZM0 10L5 16L10 10Z" fill="#141414" />
              <text x="12" y="17" fontFamily="Roboto, sans-serif" fontWeight="700" fontSize="21" fill="#141414">4G</text>
              <g strokeWidth="5" strokeLinecap="round" stroke="#141414">
                <path d="M26 26V35M37 22V35M48 13V35" />
                <path d="M59 4V35" stroke="#cfcfcf" />
              </g>
            </svg>
            <svg width="67" height="36" viewBox="0 0 67 36" aria-hidden>
              <path d="M9 1H55Q63 1 63 9V12Q66 13 66 15V21Q66 23 63 24V27Q63 35 55 35H9Q1 35 1 27V9Q1 1 9 1Z" fill="#b2b2b2" stroke="#7f7f7f" strokeWidth="1" />
              <text x="31" y="28" textAnchor="middle" fontFamily="Roboto, sans-serif" fontWeight="900" fontSize="29" fill="#fff">1</text>
            </svg>
          </StatusGroup>
        </StatusBar>

        <Header>
          <HeaderSide $gap={24}>
            <button aria-label="返回">
              <svg width="33" height="56" viewBox="0 0 33 56" fill="none" stroke="#333" strokeWidth="6" strokeLinecap="round" aria-hidden>
                <path d="M30 3L4 28L30 53" />
              </svg>
            </button>
            <Logo>东方<br />财富</Logo>
          </HeaderSide>
          <TitleBlock>
            <TitleRow>
              <Title>南京公用</Title>
              <CorpBadge>企</CorpBadge>
            </TitleRow>
            <CodeRow>
              000421
              <LevelTag>L1</LevelTag>
              <Down w={22} h={15} color="#c8c8c8" />
            </CodeRow>
          </TitleBlock>
          <HeaderSide $gap={43} $end>
            <button aria-label="智能助手"><Robot /></button>
            <button aria-label="分享"><Share /></button>
            <button aria-label="搜索"><Search /></button>
          </HeaderSide>
        </Header>

        <Quote>
          <PriceCell>
            <Price>6.81</Price>
            <Change>
              <span>-1.30%</span>
              <span>-0.09</span>
            </Change>
          </PriceCell>
          <Stat label="今开" value="7.00" color={C.red} />
          <Stat label="最高" value="7.03" color={C.red} />
          <Stat label="最低" value="6.75" color={C.green} />
          <Stat label="换手" value="5.75%" info />
          <Stat label="总手" value="33.02万" />
          <Stat label="金额" value="2.25亿" />
          <Stat label="总值" value="39.12亿" info small />
          <Stat label="流值" value="39.11亿" />
          <Stat label="市盈" value="62.52" sup="动" info small />
          <MoreButton>更多</MoreButton>
        </Quote>

        <Notice>
          <Speaker />
          <NoticeText>三季报预披露：于2025-10-28披露2025年三季报</NoticeText>
          <button aria-label="关闭公告"><Cross size={29} color="#999" sw={3} /></button>
        </Notice>

        <TabBar>
          {PERIODS.map((p) => (
            <Tab key={p} $active={p === '五日'}>{p}</Tab>
          ))}
          <Tab>
            <TabLabel>更多<Down w={15} h={13} color={C.sub} /></TabLabel>
          </Tab>
          <GearButton aria-label="设置"><Gear /></GearButton>
        </TabBar>

        <Legend>
          <LegendAverage>均价：6.81</LegendAverage>
          <span>最新：6.81</span>
          <span>0.12</span>
          <span>1.79%</span>
        </Legend>
        <PriceChart />
        <VolumeHead>
          <SelectWrap>
            <IndexSelect aria-label="指标" defaultValue="成交量">
              <option>成交量</option>
            </IndexSelect>
            <Down w={15} h={12} color={C.sub} />
          </SelectWrap>
          <VolumeItem $gap={3}>33.02万</VolumeItem>
          <VolumeItem $gap={34}>分时量:4195↑</VolumeItem>
          <VolumeItem $gap={30}>现量:<em>4195</em></VolumeItem>
        </VolumeHead>
        <VolumeWrap>
          <VolumeChart />
          <ExpandButton aria-label="全屏">
            <svg width="36" height="36" viewBox="0 0 36 36" fill="none" stroke={C.orange} strokeWidth="3" aria-hidden>
              <path d="M3 17V3H17M3 3L15 15M33 19V33H19M33 33L21 21" />
            </svg>
          </ExpandButton>
        </VolumeWrap>
        <Dates>
          {DATES.map((d) => (
            <span key={d}>{d}</span>
          ))}
        </Dates>

        <Banner>
          <Megaphone />
          <BannerLink href="#offer">！尾盘买，次日应对更从容！点击领取10月机会名</BannerLink>
          <BannerRule />
          <button aria-label="关闭横幅"><Cross size={34} color={C.orange} sw={3} /></button>
        </Banner>

        <SectionTop>
          <TabBar $pad={28}>
            {SECTIONS.map((s) => (
              <Tab key={s} $active={s === '股吧'}>{s}</Tab>
            ))}
          </TabBar>
        </SectionTop>

        <Feed>
          <Card>
            <CardArt width="260" height="180" viewBox="0 0 260 180" aria-hidden>
              <path d="M51 0H260V180H51Z" fill="#fdf0ee" />
              <path d="M5 31H51V82H5Z" fill="#fef2f0" />
              <path d="M105 24H227V180H105Z" fill="#fef5f3" />
              <path d="M126 53H203V180H126Z" fill="#fbe7e5" />
            </CardArt>
            <CardIcon>
              <svg width="30" height="28" viewBox="0 0 30 28" aria-hidden>
                <path d="M0 12H6V26H0ZM9 2H21V26H9ZM24 16H30V26H24Z" fill="#fff" />
                <path d="M13 10L16 8V18" fill="none" stroke="#dd5b56" strokeWidth="3" />
              </svg>
            </CardIcon>
            <CardTitle>人气榜</CardTitle>
            <svg width="15" height="26" viewBox="0 0 15 26" fill="none" stroke="#a8a8a8" strokeWidth="3" aria-hidden>
              <path d="M2 2L12 13L2 24" />
            </svg>
          </Card>
          <Card>
            <CardArt width="244" height="180" viewBox="0 0 244 180" aria-hidden>
              <path d="M0 0H244V180H20Z" fill="#fdeeec" />
              <text x="32" y="190" fontFamily="Roboto, sans-serif" fontStyle="italic" fontWeight="900" fontSize="210" fill="#fbe3e1" stroke="#fef5f3" strokeWidth="12">VS</text>
            </CardArt>
            <CardIcon>VS</CardIcon>
            <CardTitle>多空看盘</CardTitle>
          </Card>
        </Feed>

        <BottomNav>
          <IndexButton>
            <IndexValue>
              <svg width="21" height="8" viewBox="0 0 21 8" aria-hidden>
                <path d="M0 8L10 0L21 8Z" fill={C.sub} />
              </svg>
              1936.32
            </IndexValue>
            <IndexRow>
              <IndexName>燃气</IndexName>
              <span>-0.40%</span>
            </IndexRow>
          </IndexButton>
          {ACTIONS.map((a) => (
            <NavButton key={a.name}>
              <NavIcon>{a.icon}</NavIcon>
              {a.name}
            </NavButton>
          ))}
        </BottomNav>

        <SystemNav>
          <SystemKey aria-label="最近任务">
            <svg width="36" height="36" viewBox="0 0 36 36" stroke="#666" strokeWidth="3" aria-hidden>
              <path d="M0 2H36M0 18H36M0 34H36" />
            </svg>
          </SystemKey>
          <SystemKey aria-label="主屏幕">
            <svg width="36" height="36" viewBox="0 0 36 36" aria-hidden>
              <rect x="1" y="1" width="34" height="34" rx="7" fill="none" stroke="#5c5c5c" strokeWidth="2" />
            </svg>
          </SystemKey>
          <SystemKey aria-label="返回上一页">
            <svg width="36" height="36" viewBox="0 0 36 36" aria-hidden>
              <path d="M32 1Q34 0 34 3V33Q34 36 32 35L3 20Q0 18 3 16Z" fill="none" stroke="#5c5c5c" strokeWidth="2" />
            </svg>
          </SystemKey>
        </SystemNav>
      </Page>
    </>
  );
}
